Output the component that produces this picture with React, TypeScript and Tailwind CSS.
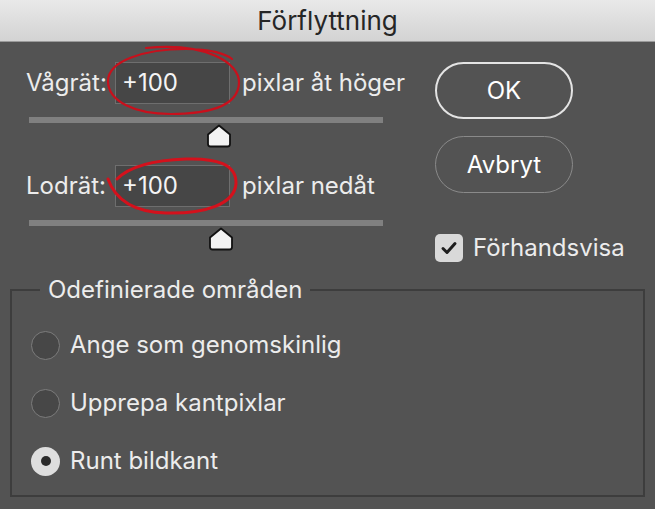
import React from "react";

const font = { fontFamily: "Inter, 'Liberation Sans', sans-serif" };

function Thumb() {
  return (
    <svg width="26" height="24" viewBox="0 0 26 24">
      <path
        d="M13 1.5 L24 10.5 L24 20 Q24 22.5 21.5 22.5 L4.5 22.5 Q2 22.5 2 20 L2 10.5 Z"
        fill="#f2f2f2"
        stroke="#111"
        strokeWidth="1.8"
        strokeLinejoin="round"
      />
    </svg>
  );
}

// hand drawn red marks round the inputs, coordinates relative to the input box
function Ellipse({ loose }: { loose?: boolean }) {
  return (
    <svg
      className="absolute left-0 top-0 pointer-events-none overflow-visible"
      width="115"
      height="42"
    >
      {loose ? (
        <path
          d="M-8 13 C -2 30, 12 46, 50 47 C 90 48, 118 38, 120 18 C 121 -2, 100 -8, 70 -7 C 40 -6, 14 0, 1 13"
          fill="none"
          stroke="#d4111c"
          strokeWidth="3"
          strokeLinecap="round"
        />
      ) : (
        <path
          d="M30 -15 C 90 -21, 124 0, 123 20 C 122 44, 90 51, 55 51 C 18 51, -8 38, -8 18 C -8 -2, 28 -14, 70 -14 C 95 -14, 110 -9, 116 -4"
          fill="none"
          stroke="#c8101c"
          strokeWidth="2.2"
          strokeLinecap="round"
        />
      )}
    </svg>
  );
}

function FieldRow({
  label,
  suffix,
  loose,
  knob,
}: {
  label: string;
  suffix: string;
  loose?: boolean;
  knob: string;
}) {
  return (
    <div>
      <div className="flex items-center h-[42px]">
        <span className="w-[89px] whitespace-nowrap">{label}</span>
        <div className="relative w-[115px] h-[42px] bg-[#464646] border border-[#6e6e6e] flex items-center pl-[6px]">
          <span className="text-[#f4f4f4]">+100</span>
          <Ellipse loose={loose} />
        </div>
        <span className="ml-[12px] whitespace-nowrap">{suffix}</span>
      </div>
      <div className="mt-[13px] ml-[3px] w-[354px] h-[6px] bg-[#808080]" />
      <div className={`flex mt-[1px] ${knob}`}>
        <Thumb />
      </div>
    </div>
  );
}

function Radio({ label, checked }: { label: string; checked?: boolean }) {
  return (
    <div className="flex items-center gap-[10px]">
      {checked ? (
        <div className="w-[29px] h-[29px] rounded-full bg-[#dedede] flex items-center justify-center">
          <div className="w-[10px] h-[10px] rounded-full bg-[#2b2b2b]" />
        </div>
      ) : (
        <div className="w-[29px] h-[29px] rounded-full bg-[#474747] border-[1.5px] border-[#7c7c7c]" />
      )}
      <span>{label}</span>
    </div>
  );
}

export default function App() {
  return (
    <div
      className="w-[655px] h-[509px] bg-[#535353] flex flex-col overflow-hidden text-[#ececec] text-[24px]"
      style={font}
    >
      <div className="h-[42px] shrink-0 bg-gradient-to-b from-[#e9e9e9] to-[#d3d3d3] border-b border-[#9a9a9a] flex items-center justify-center text-[#262626] text-[26px]">
        Förflyttning
      </div>

      <div className="flex">
        <div className="pl-[26px] pt-[20px] w-[420px]">
          <FieldRow label="Vågrät:" suffix="pixlar åt höger" knob="pl-[180px]" />
          <div className="mt-[17px]">
            <FieldRow label="Lodrät:" suffix="pixlar nedåt" loose knob="pl-[182px]" />
          </div>
        </div>

        <div className="pl-[15px] pt-[20px] flex flex-col">
          <button className="w-[138px] h-[57px] rounded-full border-2 border-[#e4e4e4] text-white text-[24px]">
            OK
          </button>
          <button className="mt-[17px] w-[138px] h-[57px] rounded-full border-[1.5px] border-[#8a8a8a] text-white text-[24px]">
            Avbryt
          </button>
          <div className="mt-[37px] flex items-center gap-[10px]">
            <div className="w-[28px] h-[28px] rounded-[5px] bg-[#d9d9d9] flex items-center justify-center">
              <svg width="18" height="18" viewBox="0 0 18 18">
                <path
                  d="M3 9.5 L7 13.5 L15 4.5"
                  fill="none"
                  stroke="#1e1e1e"
                  strokeWidth="3"
                  strokeLinecap="round"
                  strokeLinejoin="round"
                />
              </svg>
            </div>
            <span>Förhandsvisa</span>
          </div>
        </div>
      </div>

      <fieldset className="mx-[10px] mt-[12px] h-[219px] border-2 border-[#3d3d3d] pl-[19px] pt-[25px]">
        <legend className="ml-[9px] px-[8px] leading-none">
          Odefinierade områden
        </legend>
        <div className="flex flex-col gap-[22px]">
          <Radio label="Ange som genomskinlig" />
          <Radio label="Upprepa kantpixlar" />
          <Radio label="Runt bildkant" checked />
        </div>
      </fieldset>
    </div>
  );
}
